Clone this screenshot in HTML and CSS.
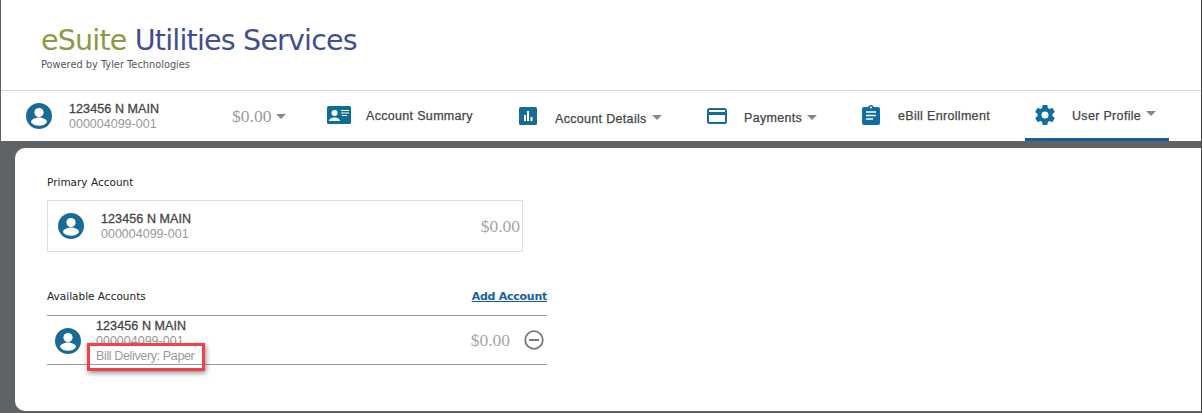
FILE: index.html
```html
<!DOCTYPE html>
<html lang="en">
<head>
<meta charset="utf-8">
<title>eSuite Utilities Services</title>
<link rel="stylesheet" href="styles.css">
</head>
<body>
<div class="page">
  <header class="brand">
    <div class="title"><span class="e">eSuite</span> Utilities Services</div>
    <div class="powered">Powered by Tyler Technologies</div>
  </header>
  <nav class="nav">
    <div class="acct">
      <svg class="avatar" viewBox="0 0 26 26"><circle cx="13" cy="13" r="13" fill="#1a6b94"/><circle cx="13" cy="9.600" r="4.600" fill="#fff"/><path d="M5 19.200c0-3 5-4.600 8-4.600s8 1.600 8 4.600c-1.800 2.300-4.800 3.600-8 3.600s-6.200-1.300-8-3.600z" fill="#fff"/></svg>
      <div class="acct-text"><div class="name">123456 N MAIN</div><div class="num">000004099-001</div></div>
    </div>
    <div class="balance">$0.00<span class="caret"></span></div>
    <a class="item summary">
      <svg class="ic-card" viewBox="0 0 24 18"><rect width="24" height="18" rx="1.500" fill="#0f6d94"/><circle cx="7.500" cy="7" r="3" fill="#fff"/><path d="M2 15c0-2.500 3.500-3.600 5.500-3.600S13 12.500 13 15z" fill="#fff"/><path d="M14 4.500h8M14 7h8M15 9.500h5" stroke="#fff" stroke-width="1.100"/></svg>
      <span class="label">Account Summary</span>
    </a>
    <a class="item details">
      <svg class="ic-bars" viewBox="0 0 18 18"><rect width="18" height="18" rx="1.500" fill="#1a6b94"/><path d="M5 8h2v6H5zM8 4h2v10H8zM11.500 10h2v4h-2z" fill="#fff"/></svg>
      <span class="label">Account Details</span><span class="caret small"></span>
    </a>
    <a class="item payments">
      <svg class="ic-pay" viewBox="0 0 20 16"><rect x="1" y="1" width="18" height="14" rx="1.500" fill="none" stroke="#1a6b94" stroke-width="2"/><rect x="1" y="4" width="18" height="3" fill="#1a6b94"/></svg>
      <span class="label">Payments</span><span class="caret small"></span>
    </a>
    <a class="item ebill">
      <svg class="ic-clip" viewBox="0 0 18 20"><path d="M2 2h4.300C6.700.800 7.700 0 9 0s2.300.8 2.700 2H16a2 2 0 0 1 2 2v14a2 2 0 0 1-2 2H2a2 2 0 0 1-2-2V4a2 2 0 0 1 2-2z" fill="#0f6da0"/><circle cx="9" cy="2.400" r="1" fill="#fff"/><path d="M4 7h10M4 10.500h10M4 14h7" stroke="#fff" stroke-width="1.600"/></svg>
      <span class="label">eBill Enrollment</span>
    </a>
    <a class="item profile">
      <svg class="ic-gear" viewBox="0 0 24 24"><path fill="#0f6da0" fill-rule="evenodd" d="M19.430 12.980c.04-.32.07-.64.07-.98s-.03-.66-.07-.98l2.110-1.650c.19-.15.24-.42.12-.64l-2-3.460c-.12-.22-.39-.3-.61-.22l-2.490 1c-.52-.4-1.080-.73-1.690-.98l-.38-2.650A.488.488 0 0 0 14 2h-4c-.25 0-.46.18-.49.42l-.38 2.650c-.61.25-1.170.59-1.690.98l-2.490-1c-.23-.09-.49 0-.61.22l-2 3.460c-.13.22-.07.49.12.64l2.110 1.650c-.04.32-.07.65-.07.98s.03.66.07.98l-2.110 1.650c-.19.15-.24.42-.12.64l2 3.460c.12.22.39.3.61.22l2.490-1c.52.4 1.080.73 1.690.98l.38 2.650c.03.24.24.42.49.42h4c.25 0 .46-.18.49-.42l.38-2.650c.61-.25 1.170-.59 1.690-.98l2.490 1c.23.09.49 0 .61-.22l2-3.460c.12-.22.07-.49-.12-.64l-2.110-1.650zM12 15.500a3.500 3.500 0 1 1 0-7 3.500 3.500 0 0 1 0 7z"/></svg>
      <span class="label">User Profile</span><span class="caret small"></span>
    </a>
  </nav>
  <main class="panel">
    <h2 class="section-title">Primary Account</h2>
    <div class="primary-card">
      <svg class="avatar" viewBox="0 0 26 26"><circle cx="13" cy="13" r="13" fill="#1a6b94"/><circle cx="13" cy="9.600" r="4.600" fill="#fff"/><path d="M5 19.200c0-3 5-4.600 8-4.600s8 1.600 8 4.600c-1.800 2.300-4.800 3.600-8 3.600s-6.200-1.300-8-3.600z" fill="#fff"/></svg>
      <div class="acct-text"><div class="name">123456 N MAIN</div><div class="num">000004099-001</div></div>
      <div class="amount">$0.00</div>
    </div>
    <div class="avail">
      <div class="avail-head"><h2 class="section-title flat">Available Accounts</h2><a class="add">Add Account</a></div>
      <div class="avail-row">
        <svg class="avatar row-avatar" viewBox="0 0 26 26"><circle cx="13" cy="13" r="13" fill="#1a6b94"/><circle cx="13" cy="9.600" r="4.600" fill="#fff"/><path d="M5 19.200c0-3 5-4.600 8-4.600s8 1.600 8 4.600c-1.800 2.300-4.800 3.600-8 3.600s-6.200-1.300-8-3.600z" fill="#fff"/></svg>
        <div class="acct-text tight"><div class="name">123456 N MAIN</div><div class="num">000004099-001</div><div class="num delivery">Bill Delivery: Paper</div></div>
        <div class="amount">$0.00</div>
        <svg class="minus" viewBox="0 0 20 20"><circle cx="10" cy="10" r="8.800" fill="none" stroke="#777" stroke-width="1.800"/><path d="M5 10h10" stroke="#777" stroke-width="2"/></svg>
        <div class="highlight"></div>
      </div>
    </div>
  </main>
</div>
</body>
</html>
```
FILE: styles.css
```css
* { box-sizing: border-box; }
html, body { margin: 0; height: 100%; }
body { background: #fff; overflow: hidden; font-family: "Liberation Sans", Arial, sans-serif; }
.page { width: 1202px; height: 413px; background: #5f6366; border-left: 1px solid #5f6366; border-right: 1px solid #444; display: flex; flex-direction: column; }
.brand { height: 91px; background: #fff; border-bottom: 1px solid #d4d4d4; padding: 23px 0 0 40px; }
.title { font-family: "DejaVu Sans", sans-serif; font-size: 28.500px; line-height: 36px; color: #3f4f8f; letter-spacing: -0.8px; }
.e { color: #8b9a45; }
.powered { font-family: "DejaVu Sans", sans-serif; font-size: 9.800px; line-height: 13px; color: #555; margin-top: -1px; }
.nav { height: 50px; background: #fff; display: flex; position: relative; }
.acct { width: 231px; display: flex; align-items: center; padding-left: 25px; gap: 17px; }
.avatar { width: 26px; height: 26px; flex: none; }
.acct-text { padding-top: 2px; }
.name { font-size: 12.500px; line-height: 15px; color: #444; -webkit-text-stroke: 0.3px #444; letter-spacing: 0.1px; }
.num { font-size: 12.500px; line-height: 15px; color: #999; letter-spacing: 0; }
.delivery { letter-spacing: -0.36px; }
.balance { width: 95px; font-family: "Liberation Serif", serif; font-size: 17.500px; color: #9a9a9a; display: flex; align-items: center; height: 50px; padding-top: 1px; }
.caret { display: inline-block; width: 0; height: 0; border-left: 5px solid transparent; border-right: 5px solid transparent; border-top: 5px solid #888; margin-left: 5px; }
.item { display: flex; align-items: center; height: 50px; color: #444; }
.label { font-size: 12.500px; color: #444; -webkit-text-stroke: 0.25px #444; letter-spacing: 0.32px; }
.summary { width: 192px; gap: 15px; }
.summary svg { width: 24px; height: 18px; margin-bottom: 2px; }
.details { width: 188px; }
.details svg { width: 18px; height: 18px; margin-right: 18px; }
.details .label { padding-top: 5px; }
.details .caret, .payments .caret { margin-top: 2px; }
.payments { width: 155px; }
.payments svg { width: 20px; height: 16px; margin-right: 17px; }
.payments .label { padding-top: 4px; }
.ebill { width: 163px; gap: 18px; }
.ebill svg { width: 18px; height: 20px; margin-bottom: 3px; }
.ebill .label { padding-bottom: 1px; }
.profile { width: 144px; height: 50px; border-bottom: 3px solid #175f96; padding-left: 8px; gap: 15px; }
.profile svg { width: 24px; height: 24px; flex: none; }
.profile .label { padding-top: 3px; }
.profile .caret { margin-left: -10px; margin-top: -3px; }
.panel { margin: 7px 0 2px 14px; flex: 1; background: #fff; border-radius: 10px 0 0 10px; padding: 26px 0 0 32px; position: relative; }
.section-title { margin: 0; font-family: "DejaVu Sans", sans-serif; font-size: 10.500px; line-height: 17px; font-weight: 400; color: #222; }
.primary-card { width: 476px; height: 52px; margin-top: 9px; border: 1px solid #ddd; display: flex; align-items: center; padding: 0 2px 0 10px; gap: 17px; }
.amount { margin-left: auto; font-family: "Liberation Serif", serif; font-size: 17.500px; color: #a5a5a5; }
.avail { width: 500px; margin-top: 33px; }
.avail-head { display: flex; justify-content: space-between; align-items: center; height: 23px; }
.add { font-family: "DejaVu Sans", sans-serif; font-size: 11px; font-weight: 700; color: #175f96; text-decoration: underline; letter-spacing: -0.25px; }
.avail-row { position: relative; height: 50px; margin-top: 7px; border-top: 1px solid #999; border-bottom: 1px solid #999; display: flex; align-items: center; padding-left: 8px; gap: 16px; }
.row-avatar { margin-top: 2px; }
.tight { margin-top: 1px; margin-left: -1px; }
.minus { width: 20px; height: 20px; margin: 0 3px 0 -2px; }
.highlight { position: absolute; left: 40px; top: 27px; width: 118px; height: 28px; border: 3px solid #f0424a; box-shadow: 1px 2px 5px rgba(0,0,0,.45); }
```
